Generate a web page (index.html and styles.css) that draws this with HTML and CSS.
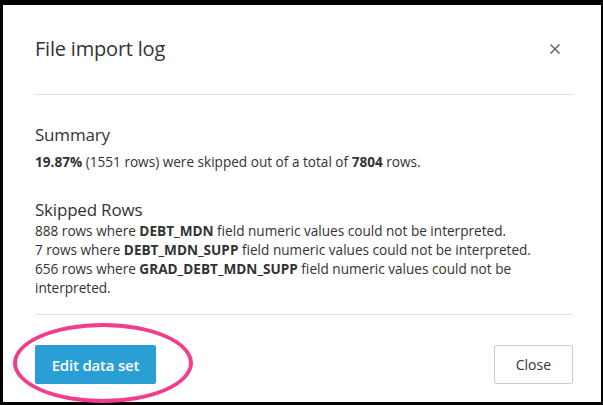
FILE: index.html
```html
<!DOCTYPE html>
<html lang="en">

<head>
    <meta charset="UTF-8">
    <title>File import log</title>
    <link rel="stylesheet" href="styles.css">
</head>

<body>
    <div class="backdrop">
        <div class="modal">
            <div class="modal-header">
                <h1>File import log</h1>
                <button class="close-x" aria-label="Close">
                    <svg width="12" height="12" viewBox="0 0 12 12">
                        <path d="M1.5 1.5 L10.5 10.5 M10.5 1.5 L1.5 10.5" stroke="#6b6b6b" stroke-width="1.6" fill="none"/>
                    </svg>
                </button>
            </div>
            <div class="modal-body">
                <h2>Summary</h2>
                <p><b>19.87%</b> (1551 rows) were skipped out of a total of <b>7804</b> rows.</p>
                <h2 class="skipped">Skipped Rows</h2>
                <ul class="skipped-list">
                    <li>888 rows where <b>DEBT_MDN</b> field numeric values could not be interpreted.</li>
                    <li>7 rows where <b>DEBT_MDN_SUPP</b> field numeric values could not be interpreted.</li>
                    <li>656 rows where <b>GRAD_DEBT_MDN_SUPP</b> field numeric values could not be interpreted.</li>
                </ul>
            </div>
            <div class="modal-footer">
                <button class="btn btn-primary">Edit data set</button>
                <button class="btn">Close</button>
                <span class="ring"></span>
            </div>
        </div>
    </div>
</body>

</html>
```

FILE: styles.css
```css
* {
    margin: 0;
    padding: 0;
    box-sizing: border-box;
    font-family: 'Open Sans', sans-serif;
}

body {
    width: 603px;
    height: 405px;
    overflow: hidden;
    background: #000;
}

.backdrop {
    display: flex;
    padding: 5px 2px 3px 3px;
    height: 405px;
}

.modal {
    flex: 1;
    background: #fff;
    padding: 0 28px 0 32px;
    color: #333;
}

.modal-header {
    display: flex;
    justify-content: space-between;
    align-items: flex-start;
    padding: 30px 0 30px;
    border-bottom: 1px solid #e1e1e1;
    height: 90px;
}

.modal-header h1 {
    font-size: 20px;
    font-weight: 400;
    line-height: 27px;
    color: #333;
    letter-spacing: -0.2px;
}

.close-x {
    border: none;
    background: none;
    margin: 6px 12px 0 0;
    cursor: pointer;
}

.modal-body {
    padding: 28px 0 20px;
    height: 220px;
    border-bottom: 1px solid #e1e1e1;
}

.modal-body h2 {
    font-size: 17px;
    font-weight: 400;
    line-height: 24px;
    letter-spacing: -0.2px;
}

.modal-body p,
.skipped-list {
    font-size: 13.6px;
    line-height: 19px;
    margin-top: 5px;
}

.modal-body h2.skipped {
    margin-top: 29px;
    line-height: 20px;
}

.skipped-list {
    list-style: none;
    margin-top: 1px;
}

.modal-footer {
    position: relative;
    display: flex;
    justify-content: space-between;
    align-items: center;
    padding-top: 30px;
}

.btn {
    height: 39px;
    padding: 0 21px;
    font-size: 14px;
    color: #333;
    background: #fff;
    border: 1px solid #ccc;
    border-radius: 2px;
    white-space: nowrap;
    cursor: pointer;
}

.btn-primary {
    width: 121px;
    padding: 0;
    color: #fff;
    background: #2a9fd6;
    border-color: #2a9fd6;
    font-size: 15px;
    font-weight: 600;
    letter-spacing: -0.2px;
}

.ring {
    position: absolute;
    left: -22px;
    top: 8px;
    width: 180px;
    height: 80px;
    border: 4px solid #f23c8e;
    border-radius: 50%;
    pointer-events: none;
}
```
